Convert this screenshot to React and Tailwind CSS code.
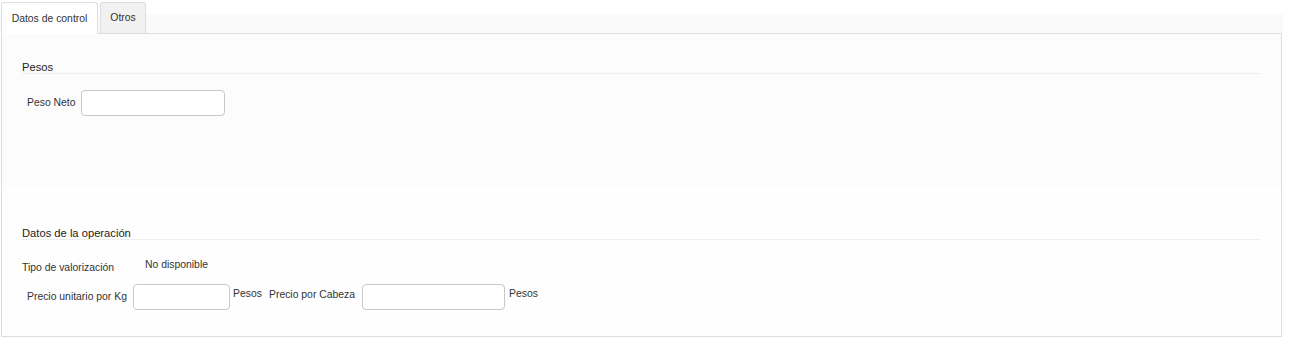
export default function App() {
  const font = { fontFamily: '"Liberation Sans", Arial, sans-serif' };
  return (
    <div className="w-[1293px] h-[343px] bg-white text-[#333] text-[10.4px] leading-[12px]" style={font}>
      <div className="pt-[2px]">
        <div className="flex items-end h-[31px] mr-[10px] relative">
          <div className="absolute left-0 right-0 top-[12px] bottom-0 bg-[#fafafa]" />
          <div className="relative ml-[1px] w-[97px] h-[32px] bg-white border border-[#ddd] border-b-0 rounded-t-[3px] flex items-center justify-center -mb-[1px] z-10">
            Datos de control
          </div>
          <div className="relative ml-[2px] w-[46px] h-[31px] bg-[#f1f1f1] border border-[#ddd] border-b-0 rounded-t-[3px] flex items-center justify-center">
            Otros
          </div>
        </div>
        <div className="ml-[1px] w-[1281px] h-[304px] border border-[#ddd] bg-[#fefefe] flex flex-col">
          <div className="bg-[#fcfcfc] h-[152px] px-[20px] pt-[28px]">
            <div className="text-[11.2px] text-[#222] leading-[11px] border-b border-[#eee] w-[1238px]">Pesos</div>
            <div className="flex items-center mt-[16px] pl-[5px]">
              <span className="w-[54px]">Peso Neto</span>
              <div className="w-[144px] h-[26px] border border-[#c8c8c8] rounded-[4px] bg-white" />
            </div>
          </div>
          <div className="px-[20px] pt-[42px]">
            <div className="text-[11.2px] text-[#222] leading-[11px] border-b border-[#eee] w-[1238px]">Datos de la operación</div>
            <div className="flex items-start mt-[19px]">
              <span className="mt-[3px] w-[123px]">Tipo de valorización</span>
              <span>No disponible</span>
            </div>
            <div className="flex items-start mt-[10px] pl-[5px]">
              <span className="mt-[7px] w-[106px]">Precio unitario por Kg</span>
              <div className="w-[97px] h-[26px] border border-[#c8c8c8] rounded-[4px] bg-white" />
              <span className="ml-[3px] mt-[4px] w-[36px]">Pesos</span>
              <span className="mt-[5px] w-[93px]">Precio por Cabeza</span>
              <div className="w-[143px] h-[26px] border border-[#c8c8c8] rounded-[4px] bg-white" />
              <span className="ml-[4px] mt-[4px]">Pesos</span>
            </div>
          </div>
        </div>
      </div>
    </div>
  );
}
